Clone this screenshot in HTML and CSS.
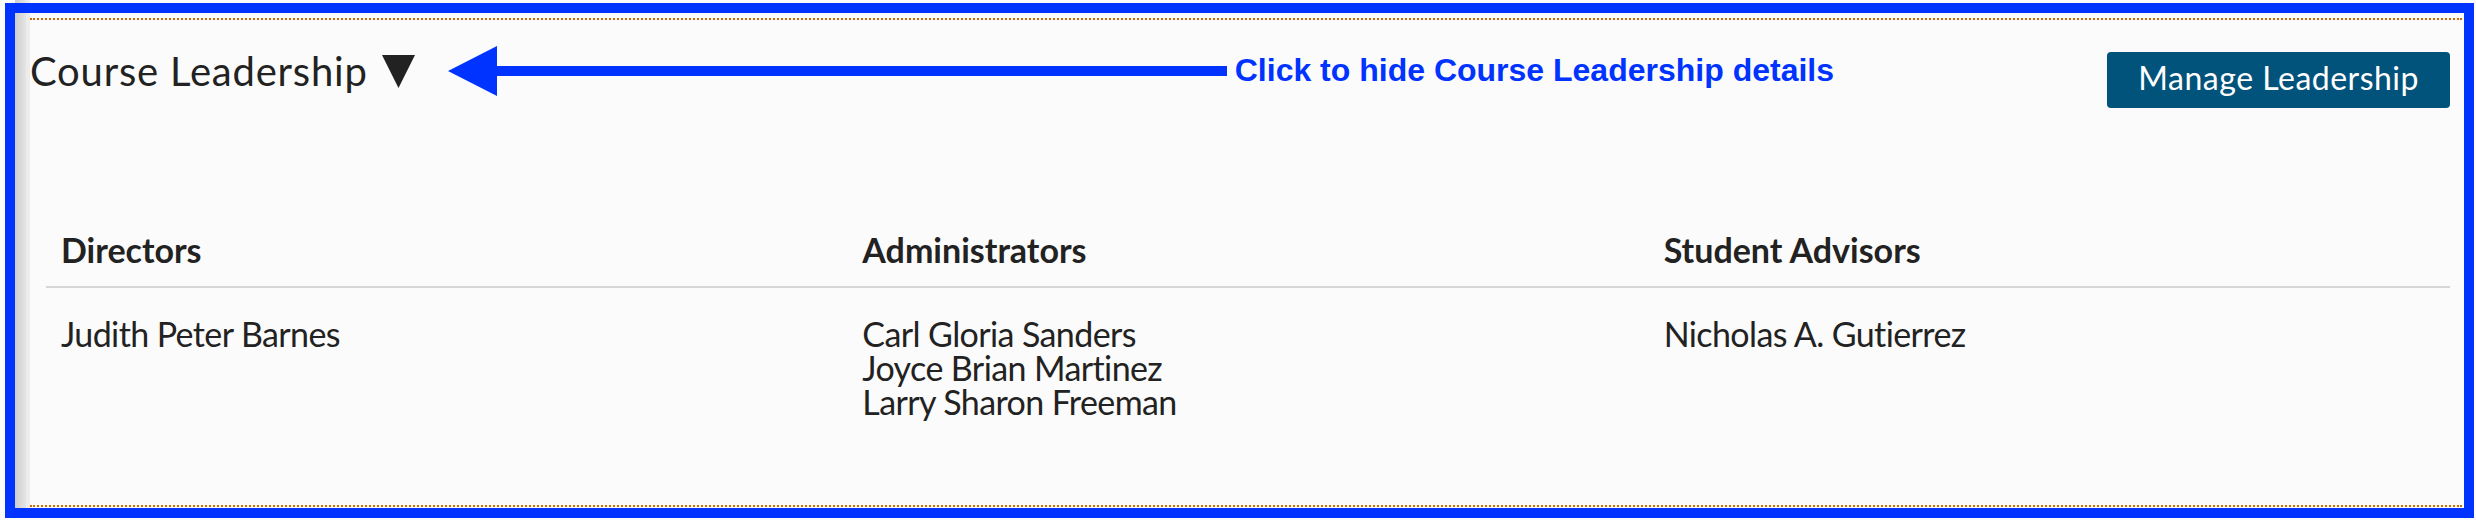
FILE: index.html
```html
<!DOCTYPE html>
<html lang="en">
<head>
  <meta charset="UTF-8">
  <title>Course Leadership</title>
  <link rel="stylesheet" href="styles.css">
</head>
<body>
  <div class="frame">
    <section class="panel">
      <div class="panel-head">
        <div class="title-row">
          <h2 class="title">Course Leadership</h2>
          <svg class="caret" width="33" height="33" viewBox="0 0 33 33"><polygon points="0,0 33,0 16.5,33" fill="#222"/></svg>
          <svg class="pointer" width="779" height="50" viewBox="0 0 779 50">
            <polygon points="0,25 49,0 49,50" fill="#0033ff"/>
            <rect x="48" y="20" width="731" height="10" fill="#0033ff"/>
          </svg>
          <span class="hint">Click to hide Course Leadership details</span>
        </div>
        <button class="manage-btn" type="button">Manage Leadership</button>
      </div>

      <table class="leaders">
        <thead>
          <tr>
            <th>Directors</th>
            <th>Administrators</th>
            <th>Student Advisors</th>
          </tr>
        </thead>
        <tbody>
          <tr>
            <td>Judith Peter Barnes</td>
            <td>Carl Gloria Sanders<br>Joyce Brian Martinez<br>Larry Sharon Freeman</td>
            <td>Nicholas A. Gutierrez</td>
          </tr>
        </tbody>
      </table>
    </section>
  </div>
</body>
</html>
```

FILE: styles.css
```css
body {
  margin: 0;
  font-family: 'Lato', 'Noto Sans', sans-serif;
  color: #222;
  background:
    linear-gradient(to right, #cdcdcd, #e4e4e4 72%, #ececec 72%) 15px 0 / 15px 100% no-repeat,
    #fbfbfb;
}
.frame {
  margin: 3px 2px 0 5px;
  border: 10px solid #0033ff;
  padding: 5px 2px 1px 15px;
}
.panel {
  height: 485px;
  background: #fbfbfb;
  border-top: 2px dotted #d06800;
  border-bottom: 2px dotted #d06800;
}
.panel-head {
  display: flex;
  justify-content: space-between;
  align-items: flex-start;
  padding-right: 12px;
}
.title-row {
  display: flex;
  align-items: center;
  margin-top: 26px;
}
.title {
  margin: 0;
  font-size: 40px;
  line-height: 48px;
  font-weight: 400;
  letter-spacing: 0.8px;
}
.caret {
  margin-left: 14px;
}
.pointer {
  margin-left: 33px;
}
.hint {
  margin-left: 8px;
  margin-top: -2px;
  font-family: 'Liberation Sans', Arial, sans-serif;
  font-weight: 700;
  font-size: 32px;
  line-height: 40px;
  color: #0033ff;
  white-space: nowrap;
}
.manage-btn {
  margin-top: 32px;
  padding: 6px 31px 10px;
  font-family: inherit;
  font-size: 32px;
  line-height: 40px;
  letter-spacing: 0.5px;
  color: #fff;
  background-color: #02537b;
  border: none;
  border-radius: 4px;
  cursor: pointer;
}
.leaders {
  width: 2404px;
  margin: 121px 0 0 16px;
  border-collapse: collapse;
  table-layout: fixed;
}
.leaders th {
  padding: 0 15px 16px;
  text-align: left;
  font-size: 34px;
  line-height: 41px;
  font-weight: 700;
  border-bottom: 2px solid #d6d6d6;
}
.leaders td {
  padding: 29px 15px 0;
  vertical-align: top;
  font-size: 34px;
  line-height: 34px;
  letter-spacing: -0.6px;
}
```
